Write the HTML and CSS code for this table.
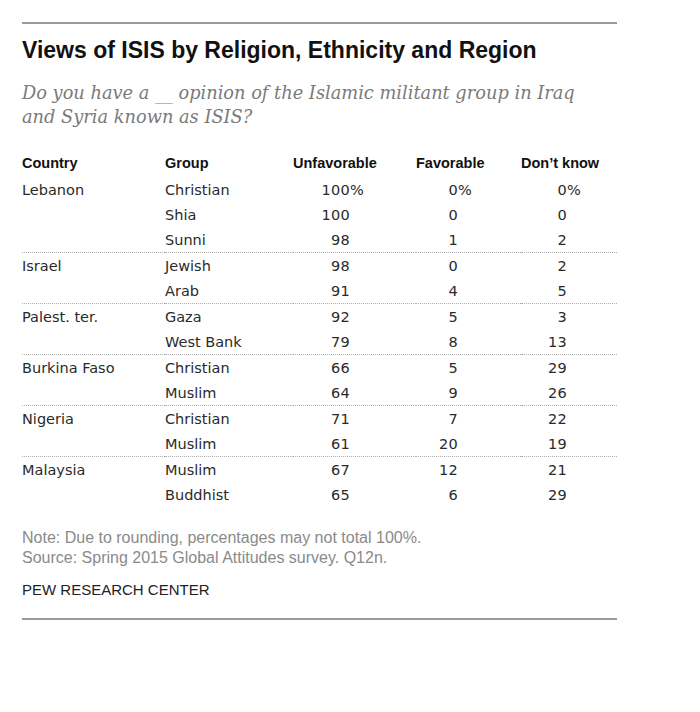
FILE: index.html
```html
<!DOCTYPE html>
<html>
<head>
<meta charset="utf-8">
<link rel="stylesheet" href="styles.css">
</head>
<body>
<div class="chart">
  <h1 class="title">Views of ISIS by Religion, Ethnicity and Region</h1>
  <p class="subtitle">Do you have a __ opinion of the Islamic militant group in Iraq and Syria known as ISIS?</p>
  <table class="data">
    <thead>
      <tr><th class="c-country">Country</th><th class="c-group">Group</th><th class="c-unf">Unfavorable</th><th class="c-fav">Favorable</th><th class="c-dk">Don’t know</th></tr>
    </thead>
    <tbody>
      <tr><td>Lebanon</td><td>Christian</td><td class="num n1">100<span class="pct">%</span></td><td class="num n2">0<span class="pct">%</span></td><td class="num n3">0<span class="pct">%</span></td></tr>
      <tr><td></td><td>Shia</td><td class="num n1">100</td><td class="num n2">0</td><td class="num n3">0</td></tr>
      <tr><td></td><td>Sunni</td><td class="num n1">98</td><td class="num n2">1</td><td class="num n3">2</td></tr>
    </tbody>
    <tbody>
      <tr><td>Israel</td><td>Jewish</td><td class="num n1">98</td><td class="num n2">0</td><td class="num n3">2</td></tr>
      <tr><td></td><td>Arab</td><td class="num n1">91</td><td class="num n2">4</td><td class="num n3">5</td></tr>
    </tbody>
    <tbody>
      <tr><td>Palest. ter.</td><td>Gaza</td><td class="num n1">92</td><td class="num n2">5</td><td class="num n3">3</td></tr>
      <tr><td></td><td>West Bank</td><td class="num n1">79</td><td class="num n2">8</td><td class="num n3">13</td></tr>
    </tbody>
    <tbody>
      <tr><td>Burkina Faso</td><td>Christian</td><td class="num n1">66</td><td class="num n2">5</td><td class="num n3">29</td></tr>
      <tr><td></td><td>Muslim</td><td class="num n1">64</td><td class="num n2">9</td><td class="num n3">26</td></tr>
    </tbody>
    <tbody>
      <tr><td>Nigeria</td><td>Christian</td><td class="num n1">71</td><td class="num n2">7</td><td class="num n3">22</td></tr>
      <tr><td></td><td>Muslim</td><td class="num n1">61</td><td class="num n2">20</td><td class="num n3">19</td></tr>
    </tbody>
    <tbody>
      <tr><td>Malaysia</td><td>Muslim</td><td class="num n1">67</td><td class="num n2">12</td><td class="num n3">21</td></tr>
      <tr><td></td><td>Buddhist</td><td class="num n1">65</td><td class="num n2">6</td><td class="num n3">29</td></tr>
    </tbody>
  </table>
  <p class="note">Note: Due to rounding, percentages may not total 100%.<br>Source: Spring 2015 Global Attitudes survey. Q12n.</p>
  <p class="credit">PEW RESEARCH CENTER</p>
</div>
</body>
</html>
```
FILE: styles.css
```css
html, body {
  margin: 0;
  padding: 0;
  background: #ffffff;
}
body {
  padding: 22px 0 0 22px;
}
.chart {
  width: 595px;
  border-top: 2px solid #9a9a9a;
  border-bottom: 2px solid #9a9a9a;
  font-family: "Liberation Sans", Arial, sans-serif;
  color: #222;
}
.title {
  margin: 12px 0 0 0;
  font-family: "Liberation Sans", Arial, sans-serif;
  font-weight: bold;
  font-size: 23px;
  line-height: 28px;
  color: #111;
}
.subtitle {
  margin: 17px 0 0 0;
  width: 570px;
  font-family: "DejaVu Serif", serif;
  font-style: italic;
  font-size: 17.8px;
  line-height: 24px;
  color: #7a7a7a;
}
.data {
  margin-top: 19px;
  border-collapse: collapse;
  width: 595px;
  font-family: "DejaVu Sans", sans-serif;
  font-size: 14.5px;
}
.data th {
  font-family: "Liberation Sans", Arial, sans-serif;
  font-weight: bold;
  text-align: left;
  height: 29px;
  padding: 0;
  vertical-align: middle;
  color: #111;
}
.data td {
  height: 25px;
  padding: 0;
  vertical-align: middle;
  color: #2a2a2a;
}
.data tbody + tbody tr:first-child td {
  border-top: 1px dotted #b0b0b0;
}
.c-country { width: 143px; }
.c-group { width: 128px; }
.c-unf { width: 123px; }
.c-fav { width: 105px; }
.num {
  text-align: right;
  position: relative;
  letter-spacing: 0.3px;
}
.data td.n1 { padding-right: 66px; }
.data td.n2 { padding-right: 63px; }
.data td.n3 { padding-right: 50px; }
.pct {
  position: absolute;
  letter-spacing: 0;
}
.note {
  margin: 21px 0 0 0;
  font-family: "Liberation Sans", Arial, sans-serif;
  font-size: 16px;
  line-height: 20px;
  color: #8a8a8a;
}
.credit {
  margin: 13px 0 0 0;
  padding-bottom: 20px;
  font-family: "Liberation Sans", Arial, sans-serif;
  font-size: 15px;
  color: #222;
}
```
